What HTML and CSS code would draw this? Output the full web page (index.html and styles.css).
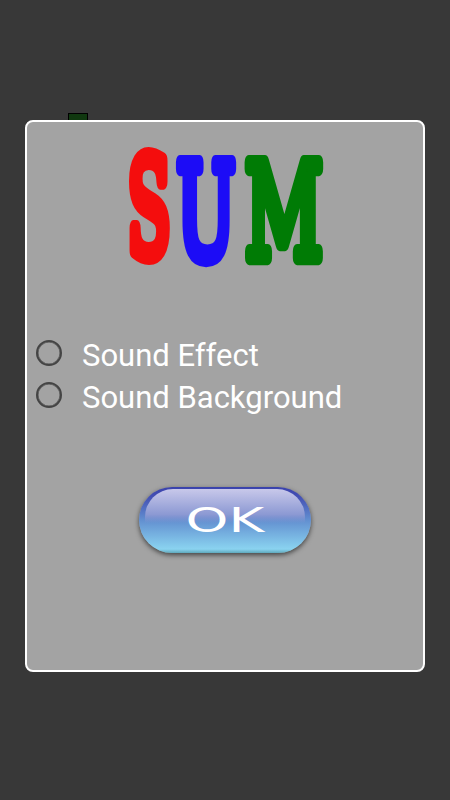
FILE: index.html
```
<!DOCTYPE html>
<html lang="en">
  <head>
    <meta charset="UTF-8" />
    <meta name="viewport" content="width=device-width, initial-scale=1.0" />
    <title>Sum</title>
    <link rel="stylesheet" href="styles.css">
  </head>
  <body>
    <div class="settings-holder">
      <div class="game-tile"></div>
      <div class="settings-dialog">
        <svg class="logo" width="220" height="175" viewBox="0 0 220 175">
          <text class="logo-letter red" transform="translate(11.5 128.5) scale(0.63 1.34)">S</text>
          <text class="logo-letter blue" transform="translate(60.5 132) scale(0.7 1.31)">U</text>
          <text class="logo-letter green" transform="translate(129 131.5) scale(0.76 1.31)">M</text>
        </svg>
        <div class="options">
          <label class="option">
            <input class="option-radio" type="radio" name="soundEffect" />
            <span>Sound Effect</span>
          </label>
          <label class="option">
            <input class="option-radio" type="radio" name="soundBackground" />
            <span>Sound Background</span>
          </label>
        </div>
        <button class="ok-button">
          <span class="ok-text">OK</span>
        </button>
      </div>
    </div>
  </body>
</html>
```
FILE: styles.css
```
body {
  margin: 0;
  background-color: #383838;
  font-family: Roboto, sans-serif;
}

.settings-holder {
  position: relative;
  box-sizing: border-box;
  height: 800px;
  padding: 120px 25px 0 25px;
}
.game-tile {
  position: absolute;
  top: 113px;
  left: 68px;
  box-sizing: border-box;
  width: 20px;
  height: 10px;
  background-color: #10380f;
  border: 1px solid #000;
}
.settings-dialog {
  position: relative;
  display: flex;
  flex-direction: column;
  align-items: center;
  box-sizing: border-box;
  height: 552px;
  background-color: #a3a3a3;
  border: 2px solid #fff;
  border-radius: 8px;
}
.logo {
  flex: none;
  margin: 4px 0 0 1px;
}
.logo-letter {
  font-family: "DejaVu Serif", serif;
  font-size: 100px;
  stroke-width: 11px;
  stroke-linejoin: round;
}
.red {
  fill: #f40d0d;
  stroke: #f40d0d;
  stroke-width: 12px;
}
.blue {
  fill: #1c0cf6;
  stroke: #1c0cf6;
}
.green {
  fill: #007b05;
  stroke: #007b05;
}
.options {
  align-self: stretch;
  margin-top: 33px;
  padding-left: 9px;
}
.option {
  display: flex;
  align-items: center;
  height: 42px;
  font-size: 31px;
  color: #fff;
}
.option-radio {
  appearance: none;
  box-sizing: border-box;
  width: 26px;
  height: 26px;
  margin: -4px 20px 0 0;
  border: 2.5px solid #444;
  border-radius: 50%;
  box-shadow: inset 0 0 0 0.5px #555;
}
.ok-button {
  position: relative;
  display: flex;
  justify-content: center;
  align-items: center;
  width: 172px;
  height: 66px;
  margin: 69px 0 0 0;
  padding: 0;
  border: none;
  border-radius: 33px;
  background: linear-gradient(#3a42ac 0, #4450b4 15%, #628fd0 50%, #8ad3f0 94%, #5fa9bd 100%);
  box-shadow: 0 2px 5px 0 rgba(0, 0, 0, 0.6);
}
.ok-button::before {
  content: "";
  position: absolute;
  top: 2px;
  left: 6px;
  width: 160px;
  height: 34px;
  border-radius: 28px 28px 0 0;
  background: linear-gradient(#c8c8ea, #8c99d3 75%, rgba(108, 143, 208, 0));
}
.ok-text {
  position: relative;
  top: 1px;
  font-family: "DejaVu Sans", sans-serif;
  font-size: 33px;
  line-height: 40px;
  color: #fff;
  transform: scaleX(1.65);
}
```
